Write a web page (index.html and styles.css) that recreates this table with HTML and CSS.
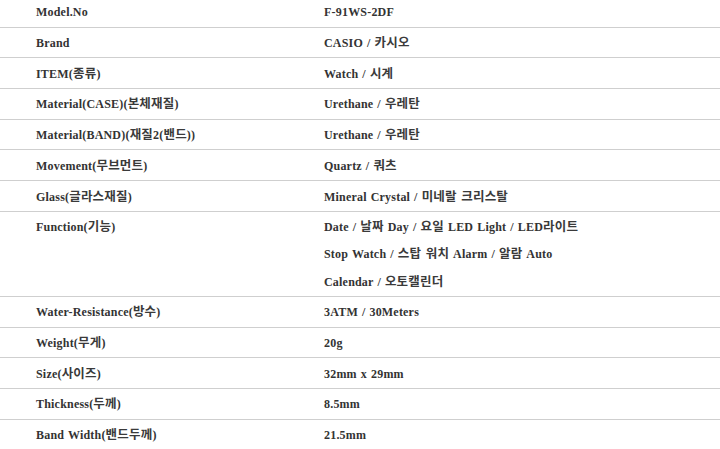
FILE: index.html
```
<!DOCTYPE html>
<html lang="ko">
<head>
<meta charset="utf-8">
<title>Spec</title>
<link rel="stylesheet" href="styles.css">
</head>
<body>
<table class="spec">
<tbody>
<tr><th>Model.No</th><td>F-91WS-2DF</td></tr>
<tr><th>Brand</th><td>CASIO / <span class="ko">카시오</span></td></tr>
<tr><th>ITEM(<span class="ko">종류</span>)</th><td>Watch / <span class="ko">시계</span></td></tr>
<tr><th>Material(CASE)(<span class="ko">본체재질</span>)</th><td>Urethane / <span class="ko">우레탄</span></td></tr>
<tr><th>Material(BAND)(<span class="ko">재질</span>2(<span class="ko">밴드</span>))</th><td>Urethane / <span class="ko">우레탄</span></td></tr>
<tr><th>Movement(<span class="ko">무브먼트</span>)</th><td>Quartz / <span class="ko">쿼츠</span></td></tr>
<tr><th>Glass(<span class="ko">글라스재질</span>)</th><td>Mineral Crystal / <span class="ko">미네랄 크리스탈</span></td></tr>
<tr><th>Function(<span class="ko">기능</span>)</th><td>Date / <span class="ko">날짜</span> Day / <span class="ko">요일</span> LED Light / LED<span class="ko">라이트</span><br>Stop Watch / <span class="ko">스탑 워치</span> Alarm / <span class="ko">알람</span> Auto<br>Calendar / <span class="ko">오토캘린더</span></td></tr>
<tr><th>Water-Resistance(<span class="ko">방수</span>)</th><td>3ATM / 30Meters</td></tr>
<tr><th>Weight(<span class="ko">무게</span>)</th><td>20g</td></tr>
<tr><th>Size(<span class="ko">사이즈</span>)</th><td>32mm x 29mm</td></tr>
<tr><th>Thickness(<span class="ko">두께</span>)</th><td>8.5mm</td></tr>
<tr><th>Band Width(<span class="ko">밴드두께</span>)</th><td>21.5mm</td></tr>
</tbody>
</table>
</body>
</html>
```
FILE: styles.css
```
html, body {
  margin: 0;
  padding: 0;
  background: #fff;
}
body {
  font-family: "Liberation Serif", "Noto Sans CJK KR", serif;
  font-size: 12px;
  font-weight: bold;
  color: #333;
}
.spec {
  width: 720px;
  border-collapse: collapse;
  margin-top: -3.2px;
}
.spec th,
.spec td {
  text-align: left;
  vertical-align: top;
  font-weight: bold;
  line-height: 27.2px;
  padding: 2.5px 0 0 0;
  border-bottom: 1px solid #cfcfcf;
  letter-spacing: 0.2px;
  word-spacing: 0.8px;
}
.spec th {
  width: 288px;
  padding-left: 36px;
}
.ko {
  font-family: "Noto Sans CJK KR", sans-serif;
  font-size: 12.5px;
  line-height: 1;
  color: #3a3a3a;
}
```
